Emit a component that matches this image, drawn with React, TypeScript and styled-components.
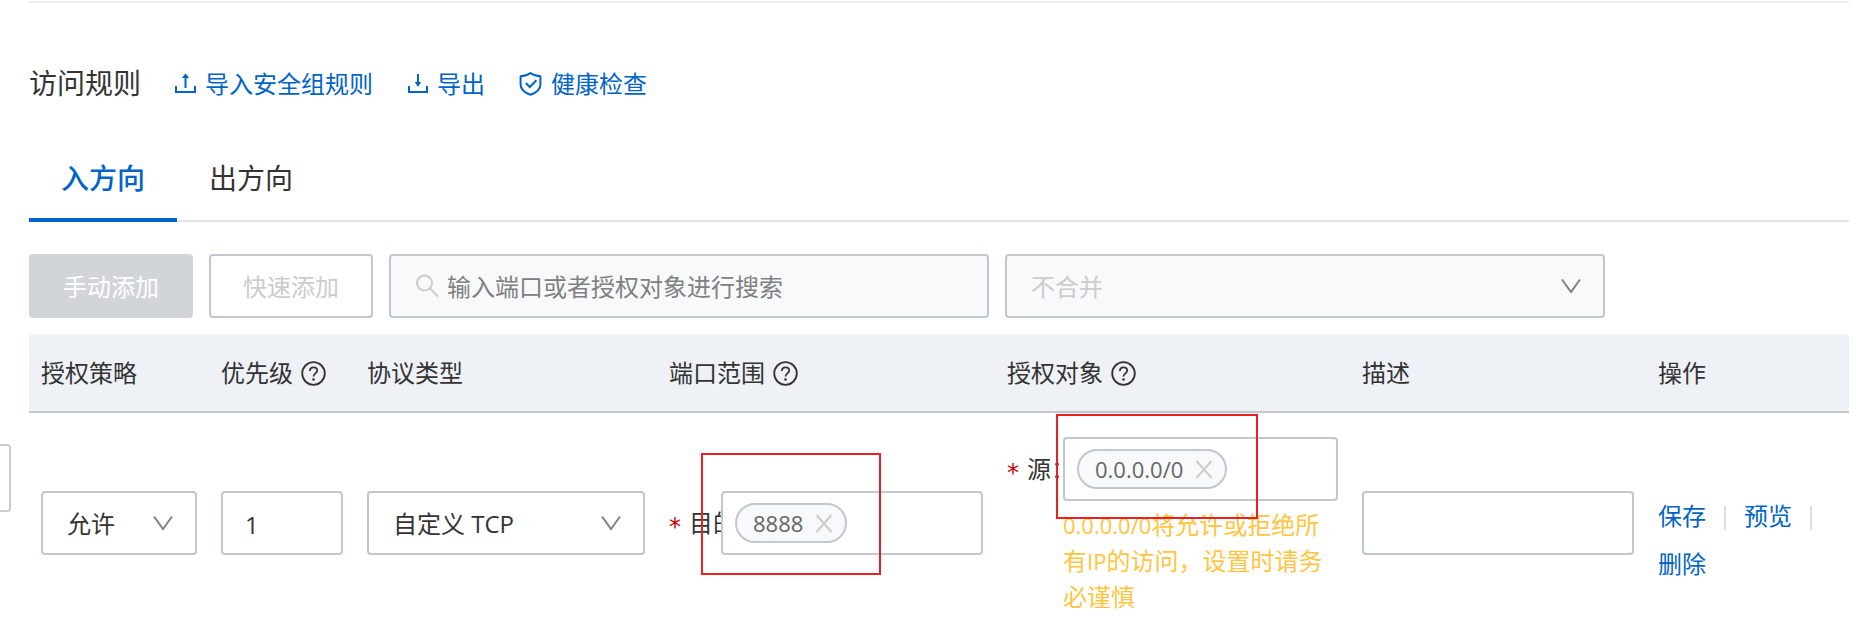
import React, { useState } from "react";
import styled, { createGlobalStyle } from "styled-components";

const color = {
  blue: "#0064c8",
  text: "#333333",
  muted: "#808080",
  disabled: "#cccccc",
  border: "#c1c7ce",
  fill: "#f7f9fb",
  head: "#eef1f6",
  warning: "#ffc440",
  danger: "#cc0000",
  mark: "#ea1f1f",
};

const GlobalStyle = createGlobalStyle`
  *, *::before, *::after { box-sizing: border-box; }
  body {
    margin: 0;
    background: #ffffff;
    color: ${color.text};
    font: 24px/36px "Open Sans", "Noto Sans CJK SC", sans-serif;
  }
  button, input, select { font: inherit; color: inherit; margin: 0; }
`;

const Page = styled.main`
  padding: 1px 7px 16px 29px;
`;

const TitleBar = styled.header`
  display: flex;
  align-items: center;
  gap: 34px;
  padding-top: 60px;
  border-top: 2px solid #eeeeee;
`;

const Title = styled.h2`
  margin: 0;
  font-size: 28px;
  line-height: 40px;
  font-weight: 400;
`;

const TitleLink = styled.a`
  display: flex;
  align-items: center;
  gap: 8px;
  padding-top: 2px;
  color: ${color.blue};
  text-decoration: none;
  white-space: nowrap;
`;

const Tabs = styled.div`
  display: flex;
  margin-top: 31px;
  border-bottom: 2px solid #e3e4e6;
`;

const Tab = styled.button<{ $active: boolean }>`
  height: 88px;
  margin-bottom: -2px;
  padding: 0 32px;
  border: 0;
  border-top: 4px solid transparent;
  border-bottom: 4px solid ${(p) => (p.$active ? color.blue : "transparent")};
  background: none;
  font-size: 28px;
  line-height: 40px;
  font-weight: ${(p) => (p.$active ? 500 : 400)};
  color: ${(p) => (p.$active ? color.blue : color.text)};
`;

const Toolbar = styled.div`
  display: flex;
  gap: 16px;
  margin: 32px 0 16px;
`;

const ToolButton = styled.button<{ $filled?: boolean }>`
  height: 64px;
  padding: 2px 32px 0;
  border: 2px solid ${(p) => (p.$filled ? "#d1d5da" : color.border)};
  border-radius: 4px;
  background: ${(p) => (p.$filled ? "#d1d5da" : "#ffffff")};
  color: ${(p) => (p.$filled ? "#ffffff" : color.disabled)};
  white-space: nowrap;
`;

const SearchBox = styled.label`
  display: flex;
  flex: 0 1 600px;
  align-items: center;
  gap: 8px;
  min-width: 0;
  height: 64px;
  padding: 0 24px;
  border: 2px solid ${color.border};
  border-radius: 4px;
  background: ${color.fill};
`;

const BareInput = styled.input`
  flex: 1;
  width: 0;
  min-width: 0;
  padding: 2px 0 0;
  border: 0;
  outline: 0;
  background: none;
  &::placeholder { color: ${color.muted}; opacity: 1; }
`;

const SelectBox = styled.div<{ $basis?: string }>`
  position: relative;
  flex: 0 1 ${(p) => p.$basis ?? "auto"};
  min-width: 0;
  svg {
    position: absolute;
    right: 24px;
    top: 24px;
    pointer-events: none;
  }
`;

const Select = styled.select`
  display: block;
  width: 100%;
  height: 64px;
  padding: 2px 48px 0 24px;
  appearance: none;
  border: 2px solid ${color.border};
  border-radius: 4px;
  background: #ffffff;
  opacity: 1;
  &:disabled { background: ${color.fill}; color: ${color.disabled}; }
`;

const TextInput = styled.input`
  display: block;
  width: 100%;
  height: 64px;
  padding: 2px 22px 0;
  border: 2px solid ${color.border};
  border-radius: 4px;
  background: #ffffff;
`;

const RuleTable = styled.table`
  width: 100%;
  table-layout: fixed;
  border-collapse: separate;
  border-spacing: 0;
`;

const HeadCell = styled.th`
  height: 79px;
  padding: 1px 12px 0;
  border-bottom: 2px solid ${color.border};
  background: ${color.head};
  font-weight: 400;
  text-align: left;
  white-space: nowrap;
  &:first-child { border-top-left-radius: 4px; }
  &:last-child { border-top-right-radius: 4px; }
`;

const HeadLabel = styled.span`
  display: flex;
  align-items: center;
  gap: 8px;
`;

const Cell = styled.td<{ $top?: number }>`
  padding: ${(p) => p.$top ?? 78}px 12px 0;
  vertical-align: top;
`;

const FieldRow = styled.div<{ $labelWidth: number }>`
  display: grid;
  grid-template-columns: ${(p) => p.$labelWidth}px minmax(0, 1fr);
`;

const FieldLabel = styled.label`
  display: flex;
  gap: 8px;
  height: 64px;
  overflow: hidden;
  line-height: 64px;
  white-space: nowrap;
`;

const Required = styled.span`
  flex: none;
  width: 12px;
  padding-top: 4px;
  color: ${color.danger};
  font-family: "DejaVu Sans", sans-serif;
`;

const FieldBody = styled.div`
  position: relative;
`;

const TagField = styled.div`
  display: flex;
  align-items: center;
  gap: 8px;
  height: 64px;
  padding: 0 12px;
  border: 2px solid ${color.border};
  border-radius: 4px;
  background: #ffffff;
`;

const Tag = styled.span`
  display: flex;
  align-items: center;
  gap: 12px;
  height: 40px;
  padding: 0 12px 0 16px;
  border: 2px solid ${color.border};
  border-radius: 20px;
  background: ${color.fill};
  color: #666666;
  font-size: 22px;
`;

const TagClose = styled.button`
  display: flex;
  padding: 0;
  border: 0;
  background: none;
  color: ${color.disabled};
`;

const Highlight = styled.div<{ $x: number; $y: number; $w: number; $h: number }>`
  position: absolute;
  z-index: 1;
  left: ${(p) => p.$x}px;
  top: ${(p) => p.$y}px;
  width: ${(p) => p.$w}px;
  height: ${(p) => p.$h}px;
  border: 2px solid ${color.mark};
  pointer-events: none;
`;

const Warning = styled.p`
  margin: 6px 0 0;
  color: ${color.warning};
`;

const Latin = styled.span`
  font-size: 22px;
`;

const Actions = styled.div`
  display: flex;
  flex-wrap: wrap;
  line-height: 48px;
`;

const Action = styled.a`
  display: flex;
  align-items: center;
  color: ${color.blue};
  text-decoration: none;
  white-space: nowrap;
`;

const Divider = styled.span`
  width: 2px;
  height: 24px;
  margin: 14px 18px 10px;
  background: #dedede;
`;

const SideHandle = styled.button`
  position: absolute;
  left: 0;
  top: 444px;
  width: 11px;
  height: 68px;
  padding: 0;
  border: 2px solid #cccccc;
  border-left: 0;
  border-radius: 0 4px 4px 0;
  background: #ffffff;
`;

const ImportIcon = () => (
  <svg width="22" height="24" viewBox="0 0 22 24" fill="none" stroke="currentColor" strokeWidth="2" aria-hidden="true">
    <path d="M1 14v6h19v-6M10.500 16V4" />
    <path d="M6.800 6 10.500 1.500 14.200 6z" fill="currentColor" stroke="none" />
  </svg>
);

const ExportIcon = () => (
  <svg width="22" height="24" viewBox="0 0 22 24" fill="none" stroke="currentColor" strokeWidth="2" aria-hidden="true">
    <path d="M2 14v6h18v-6M11 2v10" />
    <path d="M7.800 10 11 15l3.200-5z" fill="currentColor" stroke="none" />
  </svg>
);

const ShieldIcon = () => (
  <svg width="24" height="26" viewBox="0 0 24 26" fill="none" stroke="currentColor" strokeWidth="2" aria-hidden="true">
    <path d="M11.500 2c2.800 2.200 6 3.200 9.900 3.300v8.200c0 4.800-3.800 8-9.900 10.300-6.100-2.300-9.900-5.500-9.900-10.300V5.300C5.500 5.200 8.700 4.200 11.500 2z" strokeLinejoin="round" />
    <path d="m6.800 12 4 4 6.600-6.800" />
  </svg>
);

const SearchIcon = () => (
  <svg width="24" height="24" viewBox="0 0 24 24" fill="none" stroke={color.disabled} strokeWidth="2" aria-hidden="true">
    <circle cx="9.500" cy="9" r="7.500" />
    <path d="m15 14.500 8 8" />
  </svg>
);

const ChevronIcon = () => (
  <svg width="20" height="16" viewBox="0 0 20 16" fill="none" stroke={color.muted} strokeWidth="2" aria-hidden="true">
    <path d="M1 1.500 10 14 19 1.500" />
  </svg>
);

const HelpIcon = () => (
  <svg width="25" height="25" viewBox="0 0 25 25" fill="none" stroke="currentColor" strokeWidth="1.800" aria-hidden="true">
    <circle cx="12.500" cy="12.500" r="11.300" />
    <path d="M8.900 9.900c0-2.200 1.500-3.600 3.600-3.600s3.700 1.300 3.700 3.300c0 2.700-3.700 3-3.700 6" />
    <circle cx="12.500" cy="18.500" r="1.300" fill="currentColor" stroke="none" />
  </svg>
);

const CloseIcon = () => (
  <svg width="18" height="20" viewBox="0 0 18 20" fill="none" stroke="currentColor" strokeWidth="2" aria-hidden="true">
    <path d="m1.500 2 15 17M16.500 2l-15 17" />
  </svg>
);

const columns = [
  { label: "授权策略", width: 180 },
  { label: "优先级", width: 146, help: true },
  { label: "协议类型", width: 302 },
  { label: "端口范围", width: 338, help: true },
  { label: "授权对象", width: 355, help: true },
  { label: "描述", width: 296 },
  { label: "操作", width: 203 },
];

const directions = ["入方向", "出方向"];

function TagInput({ id, value }: { id: string; value: string }) {
  return (
    <TagField>
      <Tag>
        {value}
        <TagClose type="button" aria-label={`移除 ${value}`}>
          <CloseIcon />
        </TagClose>
      </Tag>
      <BareInput id={id} type="text" />
    </TagField>
  );
}

export default function App() {
  const [direction, setDirection] = useState(directions[0]);

  return (
    <>
      <GlobalStyle />
      <SideHandle type="button" aria-label="展开侧栏" />
      <Page>
        <TitleBar>
          <Title>访问规则</Title>
          <TitleLink href="#import"><ImportIcon />导入安全组规则</TitleLink>
          <TitleLink href="#export"><ExportIcon />导出</TitleLink>
          <TitleLink href="#health"><ShieldIcon />健康检查</TitleLink>
        </TitleBar>

        <Tabs role="tablist">
          {directions.map((name) => (
            <Tab
              key={name}
              type="button"
              role="tab"
              aria-selected={name === direction}
              $active={name === direction}
              onClick={() => setDirection(name)}
            >
              {name}
            </Tab>
          ))}
        </Tabs>

        <Toolbar>
          <ToolButton type="button" $filled disabled>手动添加</ToolButton>
          <ToolButton type="button" disabled>快速添加</ToolButton>
          <SearchBox>
            <SearchIcon />
            <BareInput type="text" aria-label="搜索" placeholder="输入端口或者授权对象进行搜索" />
          </SearchBox>
          <SelectBox $basis="600px">
            <Select aria-label="合并方式" disabled>
              <option>不合并</option>
            </Select>
            <ChevronIcon />
          </SelectBox>
        </Toolbar>

        <RuleTable>
          <colgroup>
            {columns.map((c) => <col key={c.label} width={c.width} />)}
          </colgroup>
          <thead>
            <tr>
              {columns.map((c) => (
                <HeadCell key={c.label} scope="col">
                  <HeadLabel>{c.label}{c.help && <HelpIcon />}</HeadLabel>
                </HeadCell>
              ))}
            </tr>
          </thead>
          <tbody>
            <tr>
              <Cell>
                <SelectBox>
                  <Select aria-label="授权策略"><option>允许</option></Select>
                  <ChevronIcon />
                </SelectBox>
              </Cell>
              <Cell>
                <TextInput type="text" aria-label="优先级" defaultValue="1" />
              </Cell>
              <Cell>
                <SelectBox>
                  <Select aria-label="协议类型"><option>自定义 TCP</option></Select>
                  <ChevronIcon />
                </SelectBox>
              </Cell>
              <Cell>
                <FieldRow $labelWidth={52}>
                  <FieldLabel htmlFor="port"><Required>*</Required>目的：</FieldLabel>
                  <FieldBody>
                    <TagInput id="port" value="8888" />
                    <Highlight $x={-20} $y={-38} $w={180} $h={122} />
                  </FieldBody>
                </FieldRow>
              </Cell>
              <Cell $top={24}>
                <FieldRow $labelWidth={56}>
                  <FieldLabel htmlFor="source"><Required>*</Required>源：</FieldLabel>
                  <FieldBody>
                    <TagInput id="source" value="0.0.0.0/0" />
                    <Warning>
                      <Latin>0.0.0.0/0</Latin>将允许或拒绝所有<Latin>IP</Latin>的访问，设置时请务必谨慎
                    </Warning>
                    <Highlight $x={-7} $y={-23} $w={202} $h={105} />
                  </FieldBody>
                </FieldRow>
              </Cell>
              <Cell>
                <TextInput type="text" aria-label="描述" />
              </Cell>
              <Cell $top={79}>
                <Actions>
                  <Action href="#save">保存</Action>
                  <Divider />
                  <Action href="#preview">预览</Action>
                  <Divider />
                  <Action href="#delete">删除</Action>
                </Actions>
              </Cell>
            </tr>
          </tbody>
        </RuleTable>
      </Page>
    </>
  );
}
